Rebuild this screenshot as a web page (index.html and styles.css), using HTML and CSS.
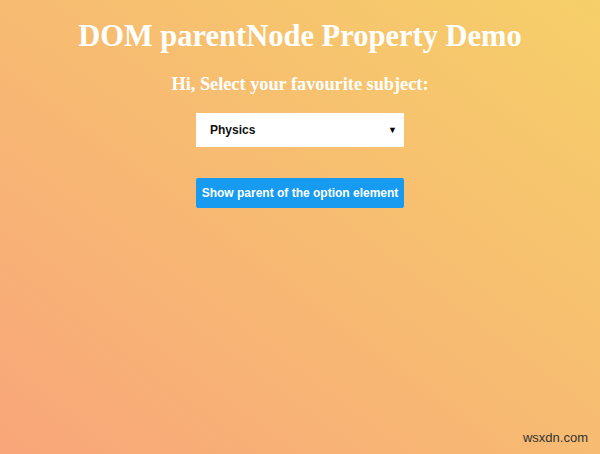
FILE: index.html
```html
<!DOCTYPE html>
<html>
<head>
<meta charset="utf-8">
<link rel="stylesheet" href="styles.css">
</head>
<body>
<div class="page">
  <h1 class="title">DOM parentNode Property Demo</h1>
  <h3 class="subtitle">Hi, Select your favourite subject:</h3>
  <div class="select">
    <span class="select-text">Physics</span>
    <span class="arrow">&#9660;</span>
  </div>
  <button class="btn">Show parent of the option element</button>
  <div class="watermark">wsxdn.com</div>
</div>
</body>
</html>
```

FILE: styles.css
```css
html, body {
  margin: 0;
  padding: 0;
}
body {
  width: 600px;
  height: 454px;
  overflow: hidden;
  background: linear-gradient(to top right, #f9a67a 0%, #f7bb72 50%, #f6cf69 100%);
  font-family: "Liberation Serif", serif;
}
.page {
  position: relative;
  width: 600px;
  height: 454px;
  display: flex;
  flex-direction: column;
  align-items: center;
}
.title {
  margin: 18px 0 0 0;
  font-size: 30.5px;
  line-height: 36px;
  font-weight: bold;
  color: #fff;
}
.subtitle {
  margin: 19px 0 0 0;
  font-size: 18.3px;
  line-height: 22px;
  font-weight: bold;
  color: #fff;
}
.select {
  margin-top: 18px;
  width: 208px;
  height: 34px;
  box-sizing: border-box;
  background: #fff;
  display: flex;
  align-items: center;
  justify-content: space-between;
  padding: 0 7px 0 14px;
  font-family: "Liberation Sans", Arial, sans-serif;
  font-size: 12px;
  font-weight: bold;
  color: #111;
}
.arrow {
  font-size: 9px;
  color: #000;
}
.btn {
  margin-top: 31px;
  width: 208px;
  height: 30px;
  border: none;
  border-radius: 2px;
  background: #169bf0;
  color: #fff;
  font-family: "Liberation Sans", Arial, sans-serif;
  font-size: 12px;
  font-weight: bold;
  padding: 0;
}
.watermark {
  position: absolute;
  right: 12px;
  bottom: 9px;
  font-family: "Liberation Sans", Arial, sans-serif;
  font-size: 13px;
  color: #333;
}
```
